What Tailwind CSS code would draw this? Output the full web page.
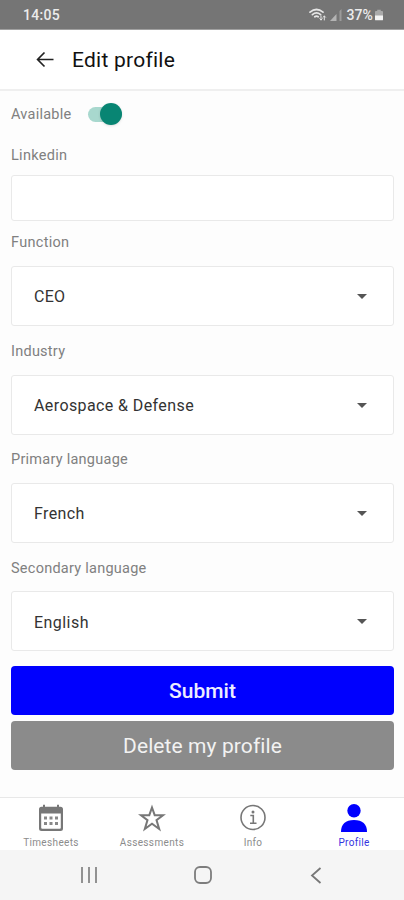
<!DOCTYPE html>
<html lang="en">
<head>
<meta charset="utf-8">
<title>Edit profile</title>
<script src="https://cdn.jsdelivr.net/npm/@tailwindcss/browser@4"></script>
</head>
<body class="bg-[#fdfdfd]">
<div class="flex h-[900px] w-[404px] flex-col overflow-hidden font-[Roboto,sans-serif]">
  <div class="flex h-[30px] shrink-0 items-center justify-between border-b border-[#a0a0a0] bg-[#757575] pt-[1px] pr-[21px] pl-[23px] text-[14px] font-medium text-[#ececec]">
    <span class="tracking-[0.3px]">14:05</span>
    <div class="flex items-center">
      <svg class="mr-[3px] h-[14px] w-[18px]" viewBox="0 0 18 14" fill="none" stroke="#e6e6e6" stroke-width="1.700" stroke-linecap="round"><path d="M1 4.200Q7.500-1.200 14 4.200M3.400 6.600Q7.500 3.200 11.600 6.600M5.800 8.800Q7.500 7.500 9.200 8.800"/><path d="M12 8v4M10.800 10.800L12 12l1.200-1.200M15.300 12V8M14.200 9.200L15.300 8l1.200 1.200" stroke-width="1"/></svg>
      <svg class="mr-[4px] h-[12px] w-[12px]" viewBox="0 0 12 12"><path d="M0 12L6.500 5v7z" fill="#b4b4b4"/><path d="M9.500 12V2L11.500 0v12z" fill="#9b9b9b"/></svg>
      <span class="tracking-[0.1px]">37%</span>
      <svg class="ml-[2px] h-[12px] w-[8px]" viewBox="0 0 9 12"><path d="M2.500 0h4v1.500H8A1 1 0 0 1 9 2.500V7H0V2.500A1 1 0 0 1 1 1.500h1.500z" fill="#aaa"/><path d="M0 6.500h9V11a1 1 0 0 1-1 1H1a1 1 0 0 1-1-1z" fill="#f4f4f4"/></svg>
    </div>
  </div>

  <header class="flex h-[61px] shrink-0 items-center border-b-2 border-[#efefef] bg-white pl-[36px]">
    <svg class="h-[18px] w-[18px]" viewBox="0 0 18 18" fill="none" stroke="#222" stroke-width="1.700"><path d="M17.500 8.500H2M8.500 1.500L1.600 8.500L8.500 15.500"/></svg>
    <h1 class="ml-[18px] pt-[2px] text-[21px] tracking-[0.25px] text-[#111]">Edit profile</h1>
  </header>

  <main class="flex flex-1 flex-col pr-[10px] pl-[11px] text-[14.500px] text-[#808080]">
    <div class="flex h-[46px] items-center">
      <span class="w-[77px] pt-[2px] tracking-[0.250px]">Available</span>
      <div class="flex h-[15px] w-[34px] items-center justify-end rounded-full bg-[#a8d8ce]"><span class="h-[22px] w-[22px] shrink-0 rounded-full bg-[#088573] shadow-sm"></span></div>
    </div>
    <label class="flex h-[38px] items-center tracking-[0.3px]">Linkedin</label>
    <div class="h-[46px] rounded-[3px] border-[1.500px] border-[#e9e9e9] bg-white"></div>
    <label class="flex h-[45px] items-center pb-[1px] tracking-[0.3px]">Function</label>
    <div class="flex h-[60px] items-center justify-between rounded-[3px] border-[1.500px] border-[#e9e9e9] bg-white pr-[26px] pl-[22px] text-[16px] text-[#333]"><span class="pt-[2px] tracking-[0.3px]">CEO</span><svg class="h-[5px] w-[10px]" viewBox="0 0 10 5"><path d="M0 0h10L5 5z" fill="#555"/></svg></div>
    <label class="flex h-[49px] items-center pt-[3px] tracking-[0.250px]">Industry</label>
    <div class="flex h-[60px] items-center justify-between rounded-[3px] border-[1.500px] border-[#e9e9e9] bg-white pr-[26px] pl-[22px] text-[16px] text-[#333]"><span class="pt-[1px] tracking-[0.4px]">Aerospace &amp; Defense</span><svg class="h-[5px] w-[10px]" viewBox="0 0 10 5"><path d="M0 0h10L5 5z" fill="#555"/></svg></div>
    <label class="flex h-[48px] items-center pt-[2px] tracking-[0.250px]">Primary language</label>
    <div class="flex h-[60px] items-center justify-between rounded-[3px] border-[1.500px] border-[#e9e9e9] bg-white pr-[26px] pl-[22px] text-[16px] text-[#333]"><span class="pt-[2px] tracking-[0.4px]">French</span><svg class="h-[5px] w-[10px]" viewBox="0 0 10 5"><path d="M0 0h10L5 5z" fill="#555"/></svg></div>
    <label class="flex h-[48px] items-center pt-[3px] tracking-[0.250px]">Secondary language</label>
    <div class="flex h-[60px] items-center justify-between rounded-[3px] border-[1.500px] border-[#e9e9e9] bg-white pr-[26px] pl-[22px] text-[16px] text-[#333]"><span class="pt-[3px] tracking-[0.450px]">English</span><svg class="h-[5px] w-[10px]" viewBox="0 0 10 5"><path d="M0 0h10L5 5z" fill="#555"/></svg></div>
    <button class="mt-[15px] flex h-[49px] shrink-0 items-center justify-center rounded-[4px] bg-[#0000fe] pt-[3px] text-[21px] font-medium text-[#ededff]">Submit</button>
    <button class="mt-[6px] flex h-[49px] shrink-0 items-center justify-center rounded-[4px] bg-[#8b8b8b] pt-[3px] text-[21px] tracking-[0.1px] text-[#f2f2f2]">Delete my profile</button>
  </main>

  <nav class="grid h-[53px] shrink-0 grid-cols-4 border-t border-[#e8e8e8] bg-white text-[10px] text-[#8c8c8c]">
    <div class="flex flex-col items-center pt-[6px] pl-[1px]">
      <svg class="h-[28px] w-[26px]" viewBox="0 0 26 28"><path fill="#777" fill-rule="evenodd" d="M5 .8h2v2h12v-2h2v2h1.500A2.500 2.500 0 0 1 25 5.300v19.200a2.500 2.500 0 0 1-2.500 2.500h-19A2.500 2.500 0 0 1 1 24.500V5.300a2.500 2.500 0 0 1 2.500-2.500H5zM3.200 9.500v14.300a1 1 0 0 0 1 1h17.600a1 1 0 0 0 1-1V9.500z"/><path fill="#888" d="M6 12.500h3v3H6zm5.500 0h3v3h-3zm5.500 0h3v3h-3zM6 18h3v3H6zm5.500 0h3v3h-3zm5.500 0h3v3h-3z"/></svg>
      <span class="mt-[5px] leading-[12px] tracking-[0.350px]">Timesheets</span>
    </div>
    <div class="flex flex-col items-center pt-[6px] pl-[1px]">
      <svg class="h-[28px] w-[28px]" viewBox="0 0 28 28" fill="none" stroke="#777" stroke-width="2"><path d="M14 3.500L16.700 11.200H25L18.500 16.100L21.200 25L14 19.800L6.800 25L9.500 16.100L3 11.200H11.300z"/></svg>
      <span class="mt-[5px] leading-[12px] tracking-[0.350px]">Assessments</span>
    </div>
    <div class="flex flex-col items-center pt-[6px] pl-[1px]">
      <svg class="h-[28px] w-[28px]" viewBox="0 0 28 28" fill="none" stroke="#777" stroke-width="1.600"><circle cx="14" cy="13.500" r="12"/><path d="M11.300 11.500h3v7.500M11 19.200h6.500"/><circle cx="14" cy="8" r="1.500" fill="#777" stroke="none"/></svg>
      <span class="mt-[5px] leading-[12px] tracking-[0.3px]">Info</span>
    </div>
    <div class="flex flex-col items-center pt-[6px] pl-[1px] text-[#3434e0]">
      <svg class="h-[28px] w-[28px]" viewBox="0 0 28 28" fill="#0000fe"><circle cx="14" cy="6.700" r="6.700"/><path d="M1 28C1 20 5.500 16 14 16s13 4 13 12z"/></svg>
      <span class="mt-[5px] leading-[12px] tracking-[0.3px]">Profile</span>
    </div>
  </nav>

  <div class="flex h-[50px] shrink-0 items-center justify-between bg-[#f5f5f5] pr-[82px] pl-[80px]">
    <svg class="h-[18px] w-[18px]" viewBox="0 0 18 18" stroke="#888" stroke-width="1.800"><path d="M2 1v16M9 1v16M16 1v16"/></svg>
    <svg class="-ml-[3px] h-[18px] w-[18px]" viewBox="0 0 18 18" fill="none" stroke="#7d7d7d" stroke-width="1.800"><rect x="1" y="1" width="16" height="16" rx="5"/></svg>
    <svg class="h-[18px] w-[12px]" viewBox="0 0 12 18" fill="none" stroke="#777" stroke-width="1.800"><path d="M10.500 2L2 9.500L10.500 17"/></svg>
  </div>
</div>
</body>
</html>
